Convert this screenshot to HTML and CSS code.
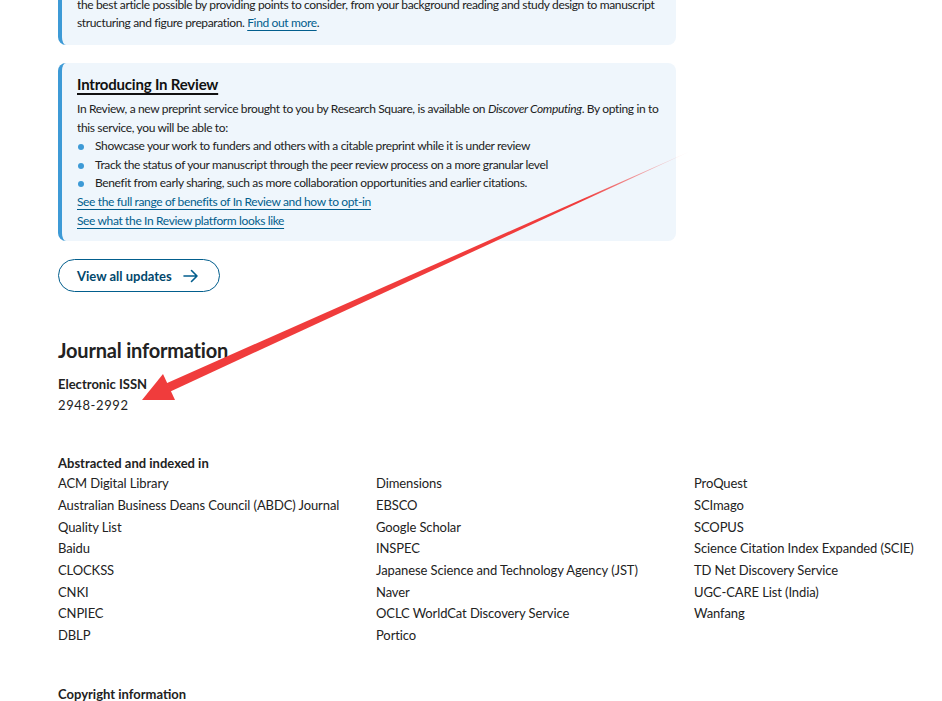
FILE: index.html
```html
<!DOCTYPE html>
<html lang="en">
<head>
<meta charset="utf-8">
<title>Discover Computing - Journal information</title>
<link rel="stylesheet" href="styles.css">
</head>
<body>
<main class="page">
  <section class="notice notice-first">
    <p class="notice-text">the best article possible by providing points to consider, from your background reading and study design to manuscript structuring and figure preparation. <a href="#" class="link">Find out more</a>.</p>
  </section>

  <section class="notice">
    <h3 class="notice-title">Introducing In Review</h3>
    <p class="notice-text">In Review, a new preprint service brought to you by Research Square, is available on <em>Discover Computing</em>. By opting in to this service, you will be able to:</p>
    <ul class="bullets">
      <li>Showcase your work to funders and others with a citable preprint while it is under review</li>
      <li>Track the status of your manuscript through the peer review process on a more granular level</li>
      <li>Benefit from early sharing, such as more collaboration opportunities and earlier citations.</li>
    </ul>
    <p class="notice-text"><a href="#" class="link">See the full range of benefits of In Review and how to opt-in</a><br><a href="#" class="link">See what the In Review platform looks like</a></p>
  </section>

  <a href="#" class="btn-outline">View all updates
    <svg class="btn-arrow" width="16" height="14" viewBox="0 0 16 14" aria-hidden="true"><path d="M1 7h13M8.5 1.5 14 7l-5.5 5.5" fill="none" stroke="currentColor" stroke-width="1.6" stroke-linecap="round" stroke-linejoin="round"/></svg>
  </a>

  <h2 class="section-title">Journal information</h2>

  <dl class="info">
    <dt class="info-label">Electronic ISSN</dt>
    <dd class="info-value">2948-2992</dd>
  </dl>

  <h3 class="info-label indexed-label">Abstracted and indexed in</h3>
  <div class="index-grid">
    <ul class="index-col">
      <li>ACM Digital Library</li>
      <li>Australian Business Deans Council (ABDC) Journal Quality List</li>
      <li>Baidu</li>
      <li>CLOCKSS</li>
      <li>CNKI</li>
      <li>CNPIEC</li>
      <li>DBLP</li>
    </ul>
    <ul class="index-col">
      <li>Dimensions</li>
      <li>EBSCO</li>
      <li>Google Scholar</li>
      <li>INSPEC</li>
      <li>Japanese Science and Technology Agency (JST)</li>
      <li>Naver</li>
      <li>OCLC WorldCat Discovery Service</li>
      <li>Portico</li>
    </ul>
    <ul class="index-col">
      <li>ProQuest</li>
      <li>SCImago</li>
      <li>SCOPUS</li>
      <li>Science Citation Index Expanded (SCIE)</li>
      <li>TD Net Discovery Service</li>
      <li>UGC-CARE List (India)</li>
      <li>Wanfang</li>
    </ul>
  </div>

  <h3 class="info-label copyright-label">Copyright information</h3>
</main>

<svg class="annotation" width="942" height="701" viewBox="0 0 942 701" aria-hidden="true">
  <defs>
    <linearGradient id="fade" x1="693" y1="150" x2="143" y2="399" gradientUnits="userSpaceOnUse">
      <stop offset="0" stop-color="#f03c3c" stop-opacity="0"/>
      <stop offset="0.2" stop-color="#f03c3c" stop-opacity="1"/>
      <stop offset="1" stop-color="#f03c3c" stop-opacity="1"/>
    </linearGradient>
  </defs>
  <polygon points="693,150 170.4,391.4 166.6,383.2" fill="url(#fade)"/>
  <polygon points="142,400 175,400 163,374" fill="#f03c3c"/>
</svg>
</body>
</html>
```

FILE: styles.css
```css
html, body {
  margin: 0;
  padding: 0;
  background: #ffffff;
  overflow: hidden;
}

body {
  font-family: Lato, "Liberation Sans", sans-serif;
  color: #222222;
  font-size: 12px;
  letter-spacing: -0.36px;
}

.page {
  position: relative;
  padding-left: 58px;
  width: 942px;
  box-sizing: border-box;
}

.notice {
  width: 618px;
  box-sizing: border-box;
  background: #eff6fc;
  border-left: 4px solid #3d9ad6;
  border-radius: 8px;
  padding: 11px 12px 11px 15px;
  margin: 0 0 18px 0;
}

.notice-first {
  margin-top: -4px;
  padding-top: 0;
  border-top-left-radius: 0;
  border-top-right-radius: 0;
  padding-bottom: 13px;
  margin-bottom: 18px;
}

.notice-title {
  margin: 0 0 6px 0;
  font-size: 15px;
  line-height: 20px;
  font-weight: 700;
  color: #111111;
  text-decoration: underline;
  text-decoration-thickness: 1.5px;
  text-underline-offset: 3px;
  letter-spacing: -0.2px;
}

.notice-text {
  margin: 0;
  line-height: 18.5px;
}

.notice-first .notice-text {
  line-height: 18px;
}

.link {
  color: #025e8d;
  text-decoration: underline;
  text-decoration-thickness: 1px;
  text-underline-offset: 3px;
}

.bullets {
  list-style: none;
  margin: 0;
  padding: 0;
}

.bullets li {
  position: relative;
  padding-left: 18px;
  line-height: 18.7px;
}

.bullets li::before {
  content: "";
  position: absolute;
  left: 1px;
  top: 7px;
  width: 6px;
  height: 6px;
  border-radius: 50%;
  background: #3d9ad6;
}

.btn-outline {
  display: inline-flex;
  align-items: center;
  gap: 11px;
  height: 33px;
  box-sizing: border-box;
  padding: 0 20px 0 18px;
  border: 1px solid #025e8d;
  border-radius: 17px;
  color: #01476c;
  font-weight: 700;
  font-size: 13px;
  text-decoration: none;
  letter-spacing: 0;
}

.btn-arrow {
  color: #025e8d;
}

.section-title {
  margin: 45px 0 0 0;
  font-size: 20px;
  line-height: 26px;
  font-weight: 700;
  color: #222222;
  letter-spacing: -0.2px;
}

.info {
  margin: 11px 0 0 0;
}

.info-label {
  margin: 0;
  font-size: 13px;
  line-height: 20px;
  font-weight: 700;
  color: #222222;
  letter-spacing: 0;
}

.info-value {
  margin: 1px 0 0 0;
  font-size: 13px;
  line-height: 20px;
  letter-spacing: 0.6px;
}

.indexed-label {
  margin-top: 38px;
  line-height: 20px;
}

.index-grid {
  display: grid;
  grid-template-columns: 300px 300px auto;
  column-gap: 18px;
  margin-top: 0;
}

.index-col {
  list-style: none;
  margin: 0;
  padding: 0;
}

.index-col li {
  font-size: 13px;
  line-height: 21.7px;
  letter-spacing: -0.1px;
}

.copyright-label {
  margin-top: 37px;
}

.annotation {
  position: absolute;
  left: 0;
  top: 0;
  pointer-events: none;
}
```
